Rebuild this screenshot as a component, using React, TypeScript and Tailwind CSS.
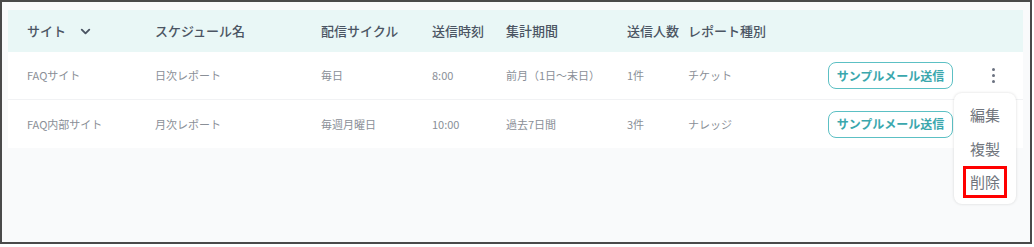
import React from 'react';

const FONT = { fontFamily: '"Noto Sans CJK JP", "Noto Sans", sans-serif' };

const rows = [
  { site: 'FAQサイト', name: '日次レポート', cycle: '毎日', time: '8:00', period: '前月（1日〜末日）', count: '1件', type: 'チケット' },
  { site: 'FAQ内部サイト', name: '月次レポート', cycle: '毎週月曜日', time: '10:00', period: '過去7日間', count: '3件', type: 'ナレッジ' },
];

// column template shared by header and rows
const COLS = 'grid grid-cols-[128px_166px_111px_74px_121px_61px_140px_125px_1fr] items-center';

const App: React.FC = () => {
  return (
    <div className="w-[1032px] h-[244px] border-2 border-[#4a4a4a] bg-[#f9fafb] relative" style={FONT}>
      <div className="ml-[6px] mt-[8px] w-[1015px]">
        {/* Header */}
        <div className={`${COLS} h-[42px] bg-[#e9f7f6] pl-[19px] text-[13px] font-medium text-[#4b5563]`}>
          <div className="flex items-center gap-[12px]">
            サイト
            <svg width="15" height="15" viewBox="0 0 24 24" fill="none" stroke="#4b5563" strokeWidth="3" strokeLinecap="round" strokeLinejoin="round">
              <path d="M6 9l6 6 6-6" />
            </svg>
          </div>
          <div>スケジュール名</div>
          <div>配信サイクル</div>
          <div>送信時刻</div>
          <div>集計期間</div>
          <div>送信人数</div>
          <div>レポート種別</div>
          <div />
          <div />
        </div>

        {/* Rows */}
        {rows.map((r, i) => (
          <div
            key={i}
            className={`${COLS} h-[48px] bg-white pl-[19px] text-[11px] text-[#8a8f97] ${i === 0 ? 'border-b border-[#f1f2f4]' : ''}`}
          >
            <div>{r.site}</div>
            <div>{r.name}</div>
            <div>{r.cycle}</div>
            <div>{r.time}</div>
            <div>{r.period}</div>
            <div>{r.count}</div>
            <div>{r.type}</div>
            <div>
              <button className="h-[27px] w-[125px] rounded-[8px] border-[1.5px] border-[#5cc0c4] text-[12px] font-bold text-[#3aa7ad] bg-white">
                サンプルメール送信
              </button>
            </div>
            <div className="flex justify-center pl-[10px]">
              {i === 0 && (
                <div className="flex flex-col gap-[3px] items-center">
                  <span className="w-[3px] h-[3px] rounded-full bg-[#6b7280]" />
                  <span className="w-[3px] h-[3px] rounded-full bg-[#6b7280]" />
                  <span className="w-[3px] h-[3px] rounded-full bg-[#6b7280]" />
                </div>
              )}
            </div>
          </div>
        ))}
      </div>

      {/* Dropdown menu */}
      <div className="absolute left-[952px] top-[91px] w-[62px] h-[111px] bg-white rounded-[8px] shadow-[0_0_3px_rgba(0,0,0,0.15)] flex flex-col items-center pt-[5px] text-[15px] text-[#6f747c]">
        <div className="h-[34px] flex items-center">編集</div>
        <div className="h-[34px] flex items-center">複製</div>
        <div className="h-[32px] w-[44px] flex items-center justify-center border-[3px] border-[#ff0000]">削除</div>
      </div>
    </div>
  );
};

export default App;
